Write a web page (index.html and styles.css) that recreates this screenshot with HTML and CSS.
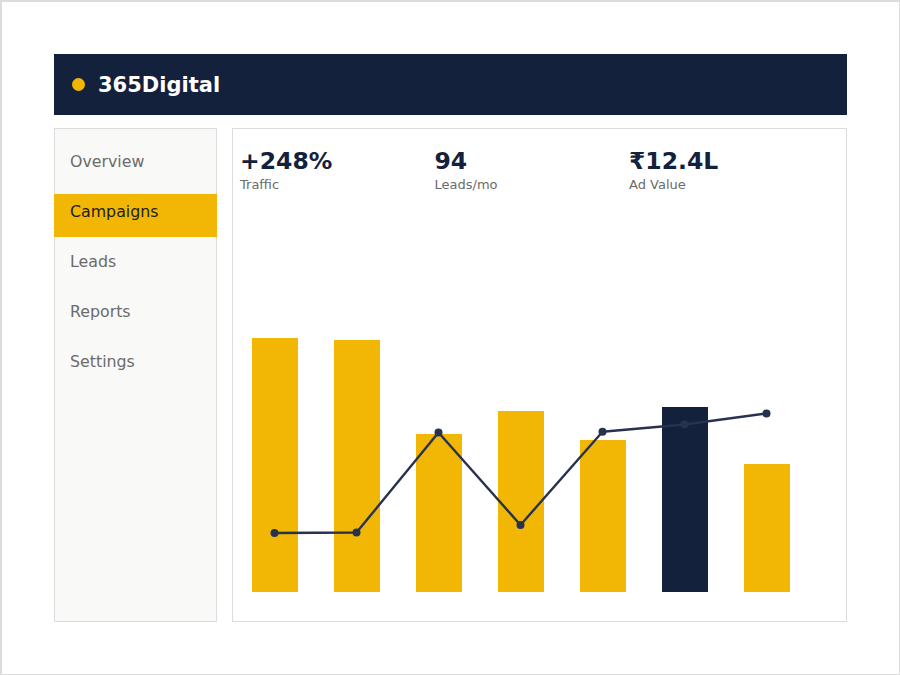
FILE: index.html
```html
<!DOCTYPE html>
<html lang="en">
<head>
<meta charset="utf-8">
<title>365Digital</title>
<link rel="stylesheet" href="styles.css">
</head>
<body>
<div class="frame">
  <header class="topbar">
    <span class="brand-dot"></span>
    <span class="brand-name">365Digital</span>
  </header>
  <div class="workspace">
    <nav class="sidebar">
      <a class="nav-item">Overview</a>
      <a class="nav-item is-active">Campaigns</a>
      <a class="nav-item">Leads</a>
      <a class="nav-item">Reports</a>
      <a class="nav-item">Settings</a>
    </nav>
    <main class="panel">
      <section class="stats">
        <div class="stat">
          <div class="stat-value">+248%</div>
          <div class="stat-label">Traffic</div>
        </div>
        <div class="stat">
          <div class="stat-value">94</div>
          <div class="stat-label">Leads/mo</div>
        </div>
        <div class="stat">
          <div class="stat-value">₹12.4L</div>
          <div class="stat-label">Ad Value</div>
        </div>
      </section>
      <svg class="chart" width="613" height="392" viewBox="0 0 613 392" aria-label="Campaign performance">
        <g class="bars">
          <rect x="19" y="138" width="46" height="254"/>
          <rect x="101" y="140" width="46" height="252"/>
          <rect x="183" y="234" width="46" height="158"/>
          <rect x="265" y="211" width="46" height="181"/>
          <rect x="347" y="240" width="46" height="152"/>
          <rect class="bar-current" x="429" y="207" width="46" height="185"/>
          <rect x="511" y="264" width="46" height="128"/>
        </g>
        <polyline class="trend" points="41.5,333 123.5,332.5 205.5,232.5 287.5,325 369.5,231.7 451.5,224.5 533.5,213.5"/>
        <g class="trend-dots">
          <circle cx="41.5" cy="333" r="4"/>
          <circle cx="123.5" cy="332.5" r="4"/>
          <circle cx="205.5" cy="232.5" r="4"/>
          <circle cx="287.5" cy="325" r="4"/>
          <circle cx="369.5" cy="231.7" r="4"/>
          <circle cx="451.5" cy="224.5" r="4"/>
          <circle cx="533.5" cy="213.5" r="4"/>
        </g>
      </svg>
    </main>
  </div>
</div>
</body>
</html>
```

FILE: styles.css
```css
* {
  box-sizing: border-box;
}

html,
body {
  margin: 0;
  padding: 0;
  background: #ffffff;
}

body {
  font-family: "DejaVu Sans", "Noto Sans", sans-serif;
  color: #14213d;
}

.frame {
  width: 900px;
  height: 675px;
  border: 2px solid #dcdcdc;
  border-right-width: 1px;
  border-bottom-width: 1px;
  padding: 52px 52px 0 52px;
  background: #ffffff;
}

/* top brand bar */
.topbar {
  height: 61px;
  width: 793px;
  background: #14213d;
  display: flex;
  align-items: center;
  padding-left: 18px;
  gap: 13px;
}

.brand-dot {
  width: 13px;
  height: 13px;
  border-radius: 50%;
  background: #f2b705;
  flex: none;
}

.brand-name {
  color: #ffffff;
  font-weight: bold;
  font-size: 21px;
  line-height: 24px;
}

.workspace {
  display: flex;
  gap: 15px;
  margin-top: 13px;
  height: 494px;
  width: 793px;
}

/* left navigation */
.sidebar {
  width: 163px;
  flex: none;
  background: #f9f9f7;
  border: 1px solid #dcdcdc;
  padding-top: 15px;
  display: flex;
  flex-direction: column;
  gap: 7px;
}

.nav-item {
  display: block;
  height: 43px;
  margin: 0 -1px;
  padding: 8px 0 0 16px;
  font-size: 15.8px;
  line-height: 20px;
  color: #6b6b6b;
}

.nav-item.is-active {
  background: #f2b705;
  color: #1d1d1d;
}

/* main content card */
.panel {
  flex: 1;
  background: #ffffff;
  border: 1px solid #dcdcdc;
  display: flex;
  flex-direction: column;
}

.stats {
  display: grid;
  grid-template-columns: 194.5px 194.5px 194.5px;
  padding: 18px 7px 0;
}

.stat-value {
  font-weight: bold;
  font-size: 23.5px;
  line-height: 28px;
  color: #14213d;
}

.stat-label {
  margin-top: 2px;
  font-size: 13px;
  line-height: 16px;
  color: #6b6b6b;
}

.chart {
  display: block;
  margin-top: 7px;
}

.bars rect {
  fill: #f2b705;
}

.bars .bar-current {
  fill: #14213d;
}

.trend {
  fill: none;
  stroke: #27324f;
  stroke-width: 2.4;
  stroke-linejoin: round;
}

.trend-dots circle {
  fill: #27324f;
}
```
